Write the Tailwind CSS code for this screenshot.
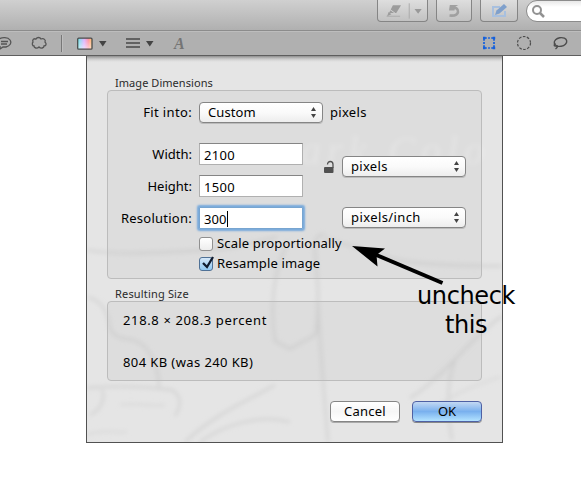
<!DOCTYPE html>
<html lang="en">
<head>
<meta charset="utf-8">
<title>Adjust Size</title>
<script src="https://cdn.jsdelivr.net/npm/@tailwindcss/browser@4"></script>
</head>
<body class="w-[581px] h-[498px] overflow-hidden bg-white font-['Noto_Sans','Lucida_Grande',sans-serif] text-[13px] leading-5 text-black">
<header class="h-[56px]">
  <div class="h-[31px] bg-linear-to-b from-[#d0d0d0] to-[#b0b0b0] border-b border-[#8c8c8c] flex items-start pl-[377px]">
    <div class="w-[51px] h-[22px] shrink-0 rounded-b-[4px] border border-t-0 border-[#858585] bg-linear-to-b from-[#dedede] to-[#c2c2c2] flex">
      <svg class="w-[51px] h-[21px]" viewBox="0 0 51 21"><path d="M15.500 5H24l-5 8h-7.500z" fill="#9c9c9c"/><path d="M12.500 9.500l5.500 4" stroke="#d2d2d2"/><path d="M11 12l3 2.500-4.500 2z" fill="#9c9c9c"/><path d="M9 16.500h14" stroke="#aaa"/><path d="M32.500 3v16" stroke="#aaa"/><path d="M38 9h7.500l-3.700 5z" fill="#999"/></svg>
    </div>
    <div class="ml-[8px] w-[36px] h-[22px] shrink-0 rounded-b-[4px] border border-t-0 border-[#858585] bg-linear-to-b from-[#dedede] to-[#c2c2c2]">
      <svg class="w-[34px] h-[21px]" viewBox="0 0 34 21"><path d="M14.500 7c4 0 7 2 6.500 5-.4 2.500-3.500 4-8.500 3.500" fill="none" stroke="#a0a0a0" stroke-width="2.600"/><path d="M12 10.500l.8-5.500h8.500l-3 1.800-.8 3.700z" fill="#a0a0a0"/></svg>
    </div>
    <div class="ml-[8px] w-[38px] h-[22px] shrink-0 rounded-b-[4px] border border-t-0 border-[#858585] bg-linear-to-b from-[#dedede] to-[#c2c2c2]">
      <svg class="w-[36px] h-[21px]" viewBox="0 0 36 21"><path d="M19 7h-7v9h12v-5" fill="none" stroke="#a8c0df" stroke-width="2"/><path d="M14 15l1.500-4.500 7.500-6.500 3 3-7.500 6.500z" fill="#7fa0cc"/></svg>
    </div>
    <div class="ml-[8px] w-[70px] h-[22px] shrink-0 rounded-l-full border border-[#8c8c8c] bg-linear-to-b from-[#e8e8e8] to-white to-30%">
      <svg class="w-[24px] h-[20px]" viewBox="0 0 24 20"><circle cx="10" cy="9" r="4" fill="none" stroke="#929292" stroke-width="2"/><path d="M13 12l4 4" stroke="#929292" stroke-width="2.500"/></svg>
    </div>
  </div>
  <div class="h-[25px] bg-[#b0b0b0] border-t border-t-[#bdbdbd] border-b border-b-[#5e5e5e]">
    <svg class="block w-[581px] h-[23px]" viewBox="0 32 581 23" fill="none">
      <defs>
        <linearGradient id="hue"><stop offset="0" stop-color="#4fe9e4"/><stop offset=".45" stop-color="#d9a8ff"/><stop offset=".75" stop-color="#ff8494"/><stop offset="1" stop-color="#ffc04f"/></linearGradient>
        <linearGradient id="lum" x2="0" y2="1"><stop offset="0" stop-color="#fff" stop-opacity=".1"/><stop offset="1" stop-color="#fff" stop-opacity=".6"/></linearGradient>
      </defs>
      <g stroke="#555" stroke-width="1.300">
        <path d="M-1 39c3-2 9-2 11 1 2 3 0 6-4 7H3l-3 2v-3M1 41.500h7M1 44h6"/>
        <path d="M36 39c1-2 4-2 5 0 3-1 5 1 4 3 2 2 1 4-1 4 0 2-3 3-5 1-2 2-5 1-5-1-2 0-2-3-1-4-1-2 1-4 2-3z"/>
      </g>
      <path d="M61.500 35v17" stroke="#777"/><path d="M62.500 35v17" stroke="#bebebe"/>
      <rect x="77.700" y="38.200" width="14.300" height="11" fill="url(#hue)"/><rect x="77.700" y="38.200" width="14.300" height="11" rx="1" fill="url(#lum)" stroke="#4c4c4c" stroke-width="1.300"/>
      <path d="M99 41h7.500l-3.700 5.500z" fill="#444"/><path d="M146 41h7.500l-3.700 5.500z" fill="#444"/>
      <path d="M126 39h14M126 43h14M126 47h14" stroke="#484848" stroke-width="1.600"/>
      <text x="174" y="49" font-family="Liberation Serif,serif" font-size="16" font-weight="bold" font-style="italic" fill="#757575">A</text>
      <path d="M485 38h9M485 48h9M484 39v9M494 39v9" stroke="#1460dc" stroke-width="1.700" stroke-dasharray="1.800 1.300"/>
      <path d="M483 38h2.500M492.700 38h2.500M483 48h2.500M492.700 48h2.500" stroke="#1460dc" stroke-width="2.500"/>
      <circle cx="524" cy="43" r="6.500" stroke="#4d4d4d" stroke-width="1.200" stroke-dasharray="2.600 1.500"/>
      <g stroke="#4d4d4d" stroke-width="1.400"><ellipse cx="560.500" cy="42" rx="6.300" ry="4.300" transform="rotate(-10 560.500 42)"/><path d="M555.500 43.500c-2 1-1.500 3 .5 2.500s2 1-.5 3"/></g>
    </svg>
  </div>
</header>

<main class="relative ml-[86px] w-[417px] h-[387px] border border-t-0 border-[#515151] bg-[#e5e5e5] pt-[19px] px-[20px]">
  <svg class="absolute inset-0 w-[415px] h-[386px]" viewBox="87 56 415 386" fill="none">
    <defs><linearGradient id="shade" x2="0" y2="1"><stop stop-color="#8c8c8c"/><stop offset="1" stop-color="#e5e5e5" stop-opacity="0"/></linearGradient>
    <filter id="soft"><feGaussianBlur stdDeviation="1.900"/></filter></defs>
    <g filter="url(#soft)" stroke="#d5d5d5" stroke-width="2.800">
      <path d="M87 250c25 5 80 3 130-1 25-2 45-8 60-12M325 239c45 10 60 22 95 24 30 3 50 3 82 3"/>
      <path d="M325 235c-8-1-11 5-10 15l3 40c0 20 0 35-3 45l-25 14-15-8c-4-25-3-55 5-80l8-20M318 300c2 50 5 80 10 142"/>
      <path d="M88 297c15 5 20 15 22 32 10 16 20 4 35 18 12 15 14 30 14 40"/>
      <path d="M87 388c25-2 55-2 85 2 12 8 8 18 3 26M102 390c5 12-5 22-12 25M185 442c30-28 60-40 90-57M200 442c25-18 60-28 90-20"/>
      <path d="M410 398c35-22 60-60 92-82M455 360c-8 20-8 50-3 80"/>
      <path d="M120 405c15-3 30 2 45 0M87 435c15-6 25-2 40-3M420 425c20-25 40-35 80-48" stroke="#dbdbdb"/>
    </g>
    <text x="301" y="164" font-family="Liberation Serif,serif" font-style="italic" font-size="40" letter-spacing="6" fill="#fff" fill-opacity=".26" filter="url(#soft)">ark Colo</text>
    <rect x="87" y="56" width="415" height="7" fill="url(#shade)"/>
  </svg>
  <div class="relative">
    <h2 class="h-[15px] pl-[8px] text-[11px] leading-[16px] tracking-[0.050px] text-[#2a2a2a]">Image Dimensions</h2>
    <section class="h-[189px] w-[375px] rounded-[4px] border border-[#bcbcbc] bg-black/[0.03] pt-[11px] pl-[5px]">
      <div class="grid grid-cols-[79px_124px_auto] gap-x-[7px] h-[41px] items-start">
        <label class="text-right whitespace-nowrap tracking-[0.350px]">Fit into:</label>
        <div class="h-[21px] rounded-[4px] border border-[#858585] bg-linear-to-b from-white via-[#fafafa] to-[#ededed] shadow-[0_1px_0_#bbb] flex justify-between pl-[8px] pr-[5px] leading-[19px] tracking-[0.100px]"><span>Custom</span><svg class="w-[7px] h-[19px]" viewBox="0 0 7 19" fill="#444"><path d="M1 8l2.500-4L6 8zM1 11l2.500 4L6 11z"/></svg></div>
        <span class="tracking-[0.300px]">pixels</span>
      </div>
      <div class="flex">
        <div class="grid grid-cols-[79px_104px] gap-x-[7px] grid-rows-[32px_32px] items-start">
          <label class="text-right leading-[22px]">Width:</label>
          <div class="h-[22px] border border-[#b0b0b0] border-t-[#858585] bg-white pl-[4px] leading-[22px] tracking-[0.300px]">2100</div>
          <label class="text-right leading-[22px]">Height:</label>
          <div class="h-[22px] border border-[#b0b0b0] border-t-[#858585] bg-white pl-[4px] leading-[22px] tracking-[0.300px]">1500</div>
        </div>
        <svg class="mt-[17px] ml-[21px] w-[12px] h-[15px] shrink-0" viewBox="0 0 12 15"><path d="M3.500 4.500c0-4 5.500-4 5.500 0V8" fill="none" stroke="#505050" stroke-width="1.300"/><rect x="0" y="7" width="9.500" height="6" rx="1" fill="#505050"/></svg>
        <div class="mt-[13px] ml-[6px] w-[124px] h-[21px] rounded-[4px] border border-[#858585] bg-linear-to-b from-white via-[#fafafa] to-[#ededed] shadow-[0_1px_0_#bbb] flex justify-between pl-[8px] pr-[5px] leading-[19px] tracking-[0.300px]"><span>pixels</span><svg class="w-[7px] h-[19px]" viewBox="0 0 7 19" fill="#444"><path d="M1 8l2.500-4L6 8zM1 11l2.500 4L6 11z"/></svg></div>
      </div>
      <div class="grid grid-cols-[79px_104px_124px] gap-x-[7px] h-[30px] items-start">
        <label class="text-right leading-[22px] whitespace-nowrap tracking-[0.250px]">Resolution:</label>
        <div class="h-[22px] rounded-[1px] border border-[#78a5d0] bg-white pl-[4px] leading-[22px] tracking-[0.100px] shadow-[0_0_2px_1.500px_#76a9dc] flex"><span>300</span><span class="mt-[3px] w-px h-[16px] bg-black"></span></div>
        <div class="ml-[32px] w-[124px] h-[21px] rounded-[4px] border border-[#858585] bg-linear-to-b from-white via-[#fafafa] to-[#ededed] shadow-[0_1px_0_#bbb] flex justify-between pl-[8px] pr-[5px] leading-[19px] tracking-[0.400px]"><span>pixels/inch</span><svg class="w-[7px] h-[19px]" viewBox="0 0 7 19" fill="#444"><path d="M1 8l2.500-4L6 8zM1 11l2.500 4L6 11z"/></svg></div>
      </div>
      <div class="ml-[86px] h-[20px] flex gap-[4px]"><span class="w-[14px] h-[14px] rounded-[3px] border border-[#909090] bg-linear-to-b from-white to-[#ededed]"></span><span class="-mt-[4px] tracking-[0.170px]">Scale proportionally</span></div>
      <div class="ml-[86px] h-[20px] flex gap-[4px]"><span class="w-[14px] h-[14px] rounded-[3px] border border-[#4f7196] bg-linear-to-b from-[#d4e7f8] to-[#8fc8f3]"><svg class="block -mt-[3px] w-[15px] h-[16px]" viewBox="0 0 15 16"><path d="M3 8l4 4 6-10" fill="none" stroke="#101c30" stroke-width="2.300"/></svg></span><span class="-mt-[4px] tracking-[0.140px]">Resample image</span></div>
    </section>
    <h2 class="mt-[7px] h-[15px] pl-[8px] text-[11px] leading-[16px] tracking-[0.170px] text-[#2a2a2a]">Resulting Size</h2>
    <section class="h-[80px] w-[375px] rounded-[4px] border border-[#bcbcbc] bg-black/[0.03] pt-[8px] pl-[15px]">
      <p class="h-[42px] tracking-[0.630px]">218.8 × 208.3 percent</p>
      <p class="tracking-[0.400px]">804 KB (was 240 KB)</p>
    </section>
    <div class="mt-[20px] flex justify-end w-[375px] gap-[12px] text-center leading-[19px]">
      <button class="w-[70px] h-[21px] rounded-[4px] border border-[#858585] bg-linear-to-b from-white via-[#f6f6f6] to-white shadow-[0_1px_0_#aaa] tracking-[0.250px]">Cancel</button>
      <button class="w-[70px] h-[21px] rounded-[4px] border border-[#4f61a4] bg-linear-to-b from-[#c3d8f2] via-[#79b0ee] to-[#b3e3ff] shadow-[0_1px_0_#888]">OK</button>
    </div>
  </div>
</main>
<svg class="absolute left-[350px] top-[240px] w-[100px] h-[50px]" viewBox="350 240 100 50"><path d="M374 254l68.500 29" stroke="#000" stroke-width="4"/><path d="M352 246l33 2.500-8.500 6.500 1 11.500z"/></svg>
<div class="absolute left-[406px] top-[282px] w-[120px] text-center font-['DejaVu_Sans',sans-serif] text-[24px] tracking-[-0.400px] leading-[29px]">uncheck<br>this</div>
</body>
</html>
